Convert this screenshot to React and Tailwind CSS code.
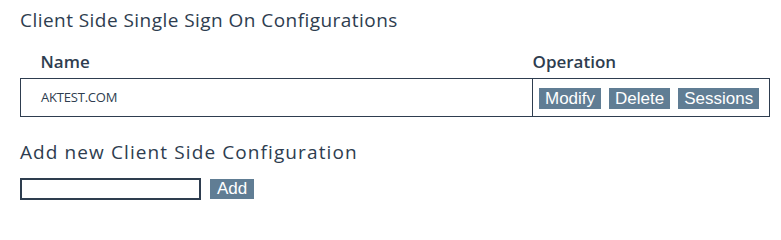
export default function App() {
  return (
    <div className="bg-white w-[781px] h-[217px] pl-[20px] pr-[11px] pt-[8px] text-[#2e3d4f] font-['Open_Sans',sans-serif]">
      <h2 className="text-[19px] leading-[24px] tracking-[0.45px]">Client Side Single Sign On Configurations</h2>
      <table className="mt-[19px] w-[750px] border-collapse">
        <thead>
          <tr className="text-[17px]">
            <th className="text-left font-semibold pl-[20px] pb-[5px] leading-[22px]">Name</th>
            <th className="text-left font-semibold pl-0 pb-[5px] leading-[22px] w-[237px]">Operation</th>
          </tr>
        </thead>
        <tbody>
          <tr className="h-[38px]">
            <td className="border border-[#2e3d4f] pl-[20px] text-[13px] tracking-[-0.2px]">AKTEST.COM</td>
            <td className="border border-[#2e3d4f] pl-[6px] pt-[1px]">
              <div className="flex gap-[8px] font-['Liberation_Sans',sans-serif] text-[17px] text-white">
                <button className="bg-[#607d94] h-[21px] leading-[21px] px-[6px]">Modify</button>
                <button className="bg-[#607d94] h-[21px] leading-[21px] px-[6px]">Delete</button>
                <button className="bg-[#607d94] h-[21px] leading-[21px] px-[6px]">Sessions</button>
              </div>
            </td>
          </tr>
        </tbody>
      </table>
      <h2 className="mt-[23px] text-[19px] leading-[24px] tracking-[1.1px]">Add new Client Side Configuration</h2>
      <div className="mt-[14px] flex items-center gap-[9px]">
        <input className="w-[181px] h-[22px] border-2 border-[#2e3d4f] outline-none" />
        <button className="bg-[#607d94] h-[20px] leading-[20px] px-[7px] text-white text-[17px] font-['Liberation_Sans',sans-serif]">Add</button>
      </div>
    </div>
  );
}
